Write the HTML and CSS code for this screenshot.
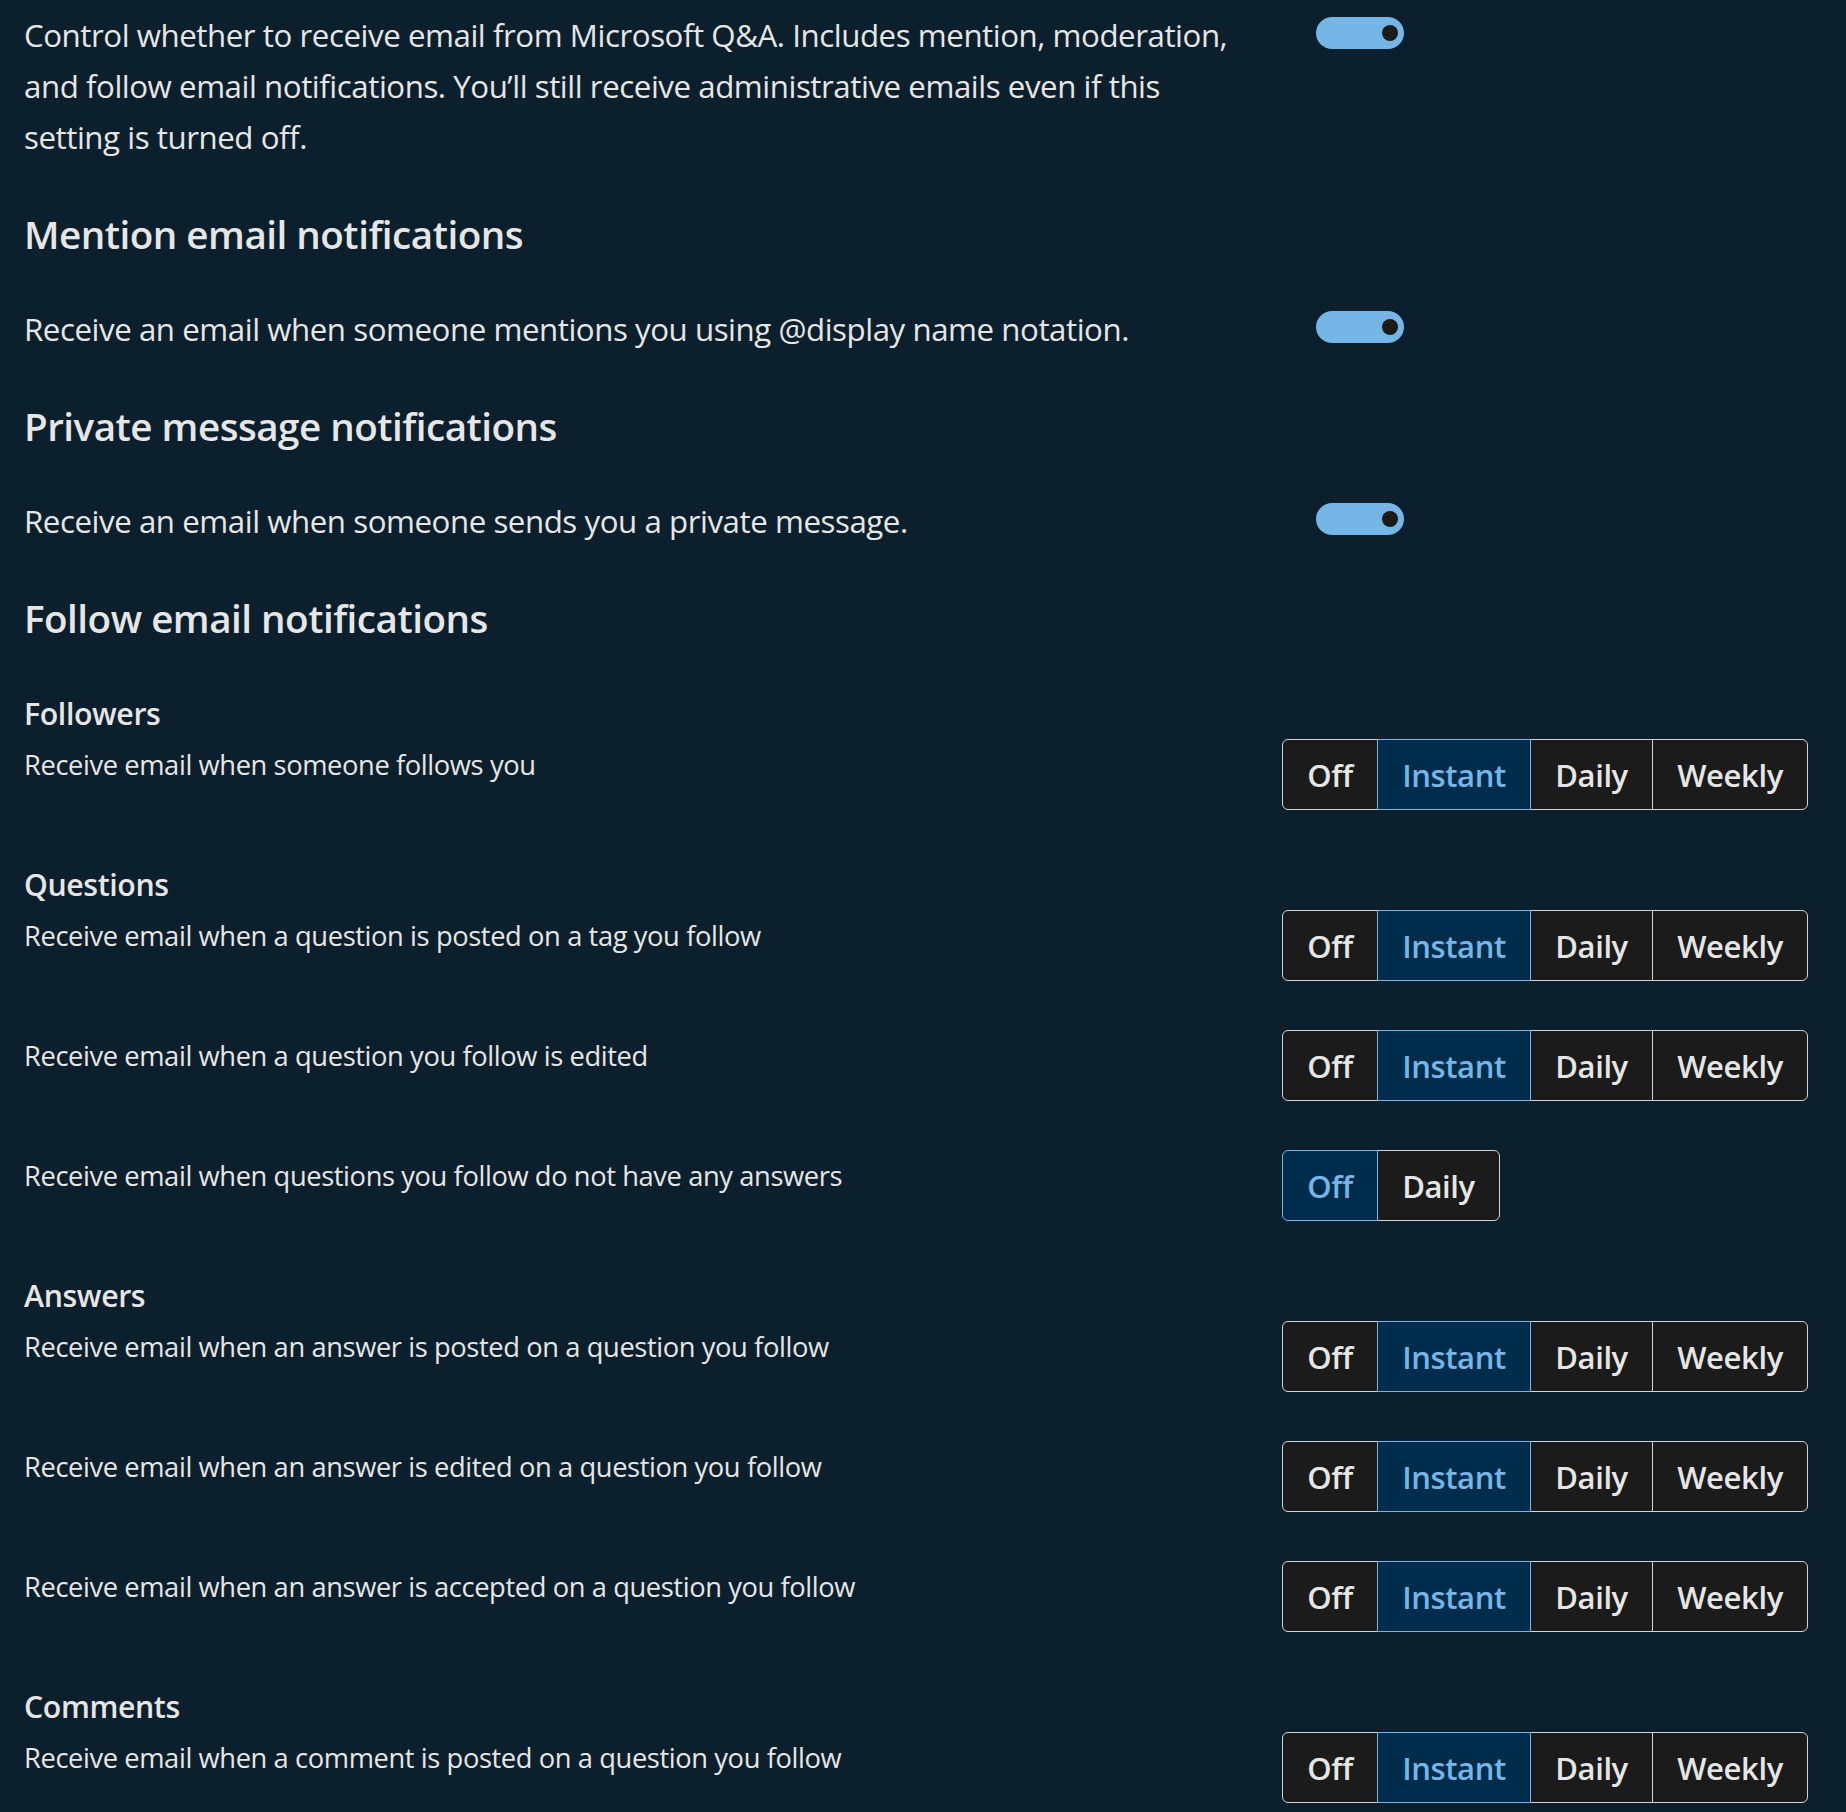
FILE: index.html
```html
<!doctype html>
<html lang="en">
<head>
    <meta charset="UTF-8">
    <meta name="viewport" content="width=device-width, initial-scale=1.0"/>
    <title>Email notifications</title>
    <link rel="stylesheet" href="styles.css">
</head>
<body>

    <div class="settings">

        <div class="row">
            <p class="label big para">Control whether to receive email from Microsoft Q&amp;A. Includes mention, moderation, and follow email notifications. You’ll still receive administrative emails even if this setting is turned off.</p>
            <button class="toggle" role="switch" aria-checked="true"><span class="knob"></span></button>
        </div>

        <h2>Mention email notifications</h2>
        <div class="row">
            <p class="label big">Receive an email when someone mentions you using @display name notation.</p>
            <button class="toggle" role="switch" aria-checked="true"><span class="knob"></span></button>
        </div>

        <h2>Private message notifications</h2>
        <div class="row">
            <p class="label big">Receive an email when someone sends you a private message.</p>
            <button class="toggle" role="switch" aria-checked="true"><span class="knob"></span></button>
        </div>

        <h2>Follow email notifications</h2>

        <div class="groups">

            <div class="group">
                <h3>Followers</h3>
                <div class="rows">
                    <div class="row">
                        <p class="label">Receive email when someone follows you</p>
                        <div class="segmented">
                            <button>Off</button><button class="on">Instant</button><button>Daily</button><button>Weekly</button>
                        </div>
                    </div>
                </div>
            </div>

            <div class="group">
                <h3>Questions</h3>
                <div class="rows">
                    <div class="row">
                        <p class="label">Receive email when a question is posted on a tag you follow</p>
                        <div class="segmented">
                            <button>Off</button><button class="on">Instant</button><button>Daily</button><button>Weekly</button>
                        </div>
                    </div>
                    <div class="row">
                        <p class="label">Receive email when a question you follow is edited</p>
                        <div class="segmented">
                            <button>Off</button><button class="on">Instant</button><button>Daily</button><button>Weekly</button>
                        </div>
                    </div>
                    <div class="row">
                        <p class="label">Receive email when questions you follow do not have any answers</p>
                        <div class="segmented">
                            <button class="on">Off</button><button>Daily</button>
                        </div>
                    </div>
                </div>
            </div>

            <div class="group">
                <h3>Answers</h3>
                <div class="rows">
                    <div class="row">
                        <p class="label">Receive email when an answer is posted on a question you follow</p>
                        <div class="segmented">
                            <button>Off</button><button class="on">Instant</button><button>Daily</button><button>Weekly</button>
                        </div>
                    </div>
                    <div class="row">
                        <p class="label">Receive email when an answer is edited on a question you follow</p>
                        <div class="segmented">
                            <button>Off</button><button class="on">Instant</button><button>Daily</button><button>Weekly</button>
                        </div>
                    </div>
                    <div class="row">
                        <p class="label">Receive email when an answer is accepted on a question you follow</p>
                        <div class="segmented">
                            <button>Off</button><button class="on">Instant</button><button>Daily</button><button>Weekly</button>
                        </div>
                    </div>
                </div>
            </div>

            <div class="group">
                <h3>Comments</h3>
                <div class="rows">
                    <div class="row">
                        <p class="label">Receive email when a comment is posted on a question you follow</p>
                        <div class="segmented">
                            <button>Off</button><button class="on">Instant</button><button>Daily</button><button>Weekly</button>
                        </div>
                    </div>
                </div>
            </div>

        </div>

    </div>

</body>
</html>
```

FILE: styles.css
```css
body{
    margin:0;
    padding:0;
    background:#0b1f2d;
    color:#e6e6e6;
    font-family:"Open Sans","Noto Sans",sans-serif;
}
.settings{
    padding:10px 0 0 24px;
}
.row{
    display:flex;
    align-items:flex-start;
}
.label{
    flex:0 0 1258px;
    box-sizing:border-box;
    margin:0;
    font-size:27.3px;
    line-height:51px;
    letter-spacing:-0.4px;
}
.big{
    font-size:31.25px;
    letter-spacing:-0.45px;
}
.para{
    padding-right:40px;
}

h2{
    margin:45px 0 44px;
    font-size:38.6px;
    line-height:52px;
    font-weight:600;
    letter-spacing:-0.5px;
}
h3{
    margin:0 0 3px;
    font-size:30.3px;
    line-height:44px;
    font-weight:600;
    letter-spacing:-0.4px;
}

.groups{
    display:flex;
    flex-direction:column;
    gap:53px;
    padding-top:4px;
}
.rows{
    display:flex;
    flex-direction:column;
    gap:49px;
}

/* switch */
.toggle{
    display:flex;
    align-items:center;
    justify-content:flex-end;
    width:88px;
    height:32px;
    margin:7px 0 0 34px;
    padding:0 6px;
    border:none;
    border-radius:16px;
    background:#75b6e7;
}
.knob{
    width:16px;
    height:16px;
    border-radius:50%;
    background:#1b1b1b;
}

/* off / instant / daily / weekly */
.segmented{
    display:flex;
}
.segmented button{
    height:71px;
    margin:0 0 0 -1px;
    padding:0 24.2px;
    border:1px solid #d4d4d4;
    background:#1b1b1b;
    color:#e6e6e6;
    font-family:"Open Sans","Noto Sans",sans-serif;
    font-size:31px;
    font-weight:600;
    letter-spacing:-0.4px;
}
.segmented button:first-child{
    margin-left:0;
    border-radius:6px 0 0 6px;
}
.segmented button:last-child{
    border-radius:0 6px 6px 0;
}
.segmented .on{
    position:relative;
    z-index:1;
    border-color:#75b6e7;
    background:#002c4c;
    color:#75b6e7;
}
```
